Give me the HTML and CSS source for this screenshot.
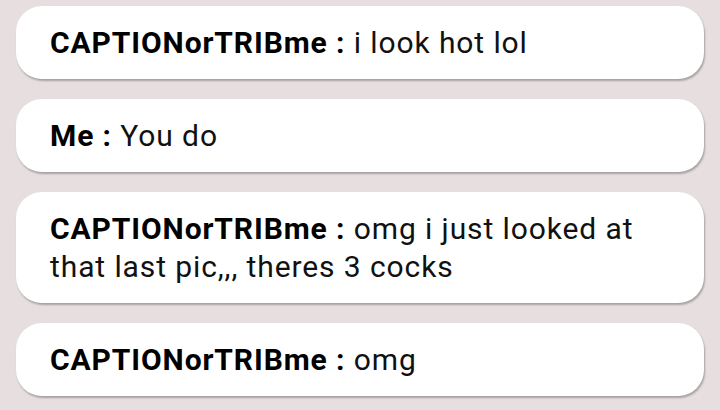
FILE: index.html
```html
<!DOCTYPE html>
<html>
<head>
<meta charset="utf-8">
<link rel="stylesheet" href="styles.css">
</head>
<body>
<div class="list">
  <div class="msg"><b>CAPTIONorTRIBme :</b> i look hot lol</div>
  <div class="msg"><b>Me :</b> You do</div>
  <div class="msg"><b>CAPTIONorTRIBme :</b> omg i just looked at that last pic,,, theres 3 cocks</div>
  <div class="msg"><b>CAPTIONorTRIBme :</b> omg</div>
</div>
</body>
</html>
```
FILE: styles.css
```css
html, body {
  margin: 0;
  padding: 0;
  background: #e7dfdf;
  width: 720px;
  height: 410px;
  overflow: hidden;
}
.list {
  display: flex;
  flex-direction: column;
  gap: 20px;
  padding: 6px 16px 0 16px;
}
.msg {
  background: #ffffff;
  border-radius: 26px;
  padding: 18px 60px 17px 34px;
  font-family: Roboto, "Liberation Sans", sans-serif;
  font-size: 30px;
  letter-spacing: 0.9px;
  line-height: 38px;
  color: #111111;
  box-shadow: 1px 2px 2px rgba(0,0,0,0.28);
}
.msg b {
  font-weight: 700;
  color: #000;
}
```
